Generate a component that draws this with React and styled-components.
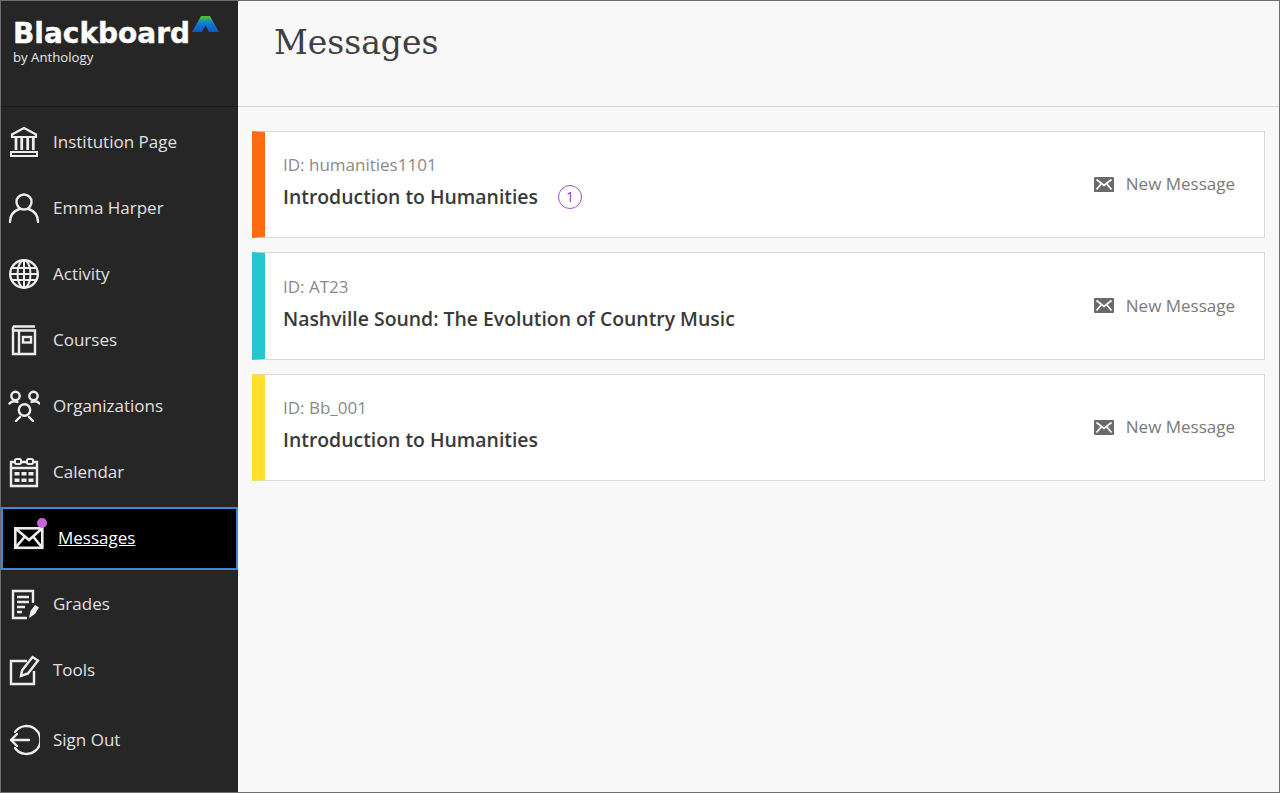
import styled, { createGlobalStyle } from "styled-components";

const GlobalStyle = createGlobalStyle`
    html, body {
        margin: 0;
        padding: 0;
        height: 100%;
    }
    body {
        font-family: "Open Sans", "Liberation Sans", sans-serif;
        background: #f8f8f8;
    }
`;

/* Icons ---------------------------*/
const Svg = ({ children, size = 32 }) => (
    <svg
        width={size}
        height={size}
        viewBox="0 0 32 32"
        fill="none"
        stroke="currentColor"
        strokeWidth="2.4"
    >
        {children}
    </svg>
);

const BankIcon = () => (
    <Svg>
        <path d="M16 2 L28 8.5 V11 H4 V8.5 Z" strokeWidth="2.2" />
        <path d="M8 12 V24 M13.7 12 V24 M19.7 12 V24 M25.3 12 V24" strokeWidth="2.8" />
        <rect x="3" y="26" width="26" height="4" strokeWidth="2" />
    </Svg>
);

const UserIcon = () => (
    <Svg>
        <circle cx="16" cy="10" r="7.5" />
        <path d="M2 30 C2 22.5 7 18.5 11.5 17 M30 30 C30 22.5 25 18.5 20.5 17" strokeLinecap="round" />
    </Svg>
);

const GlobeIcon = () => (
    <Svg>
        <circle cx="16" cy="16" r="13.8" />
        <ellipse cx="16" cy="16" rx="6.5" ry="13.8" strokeWidth="2" />
        <path d="M16 2 V30 M2 16 H30 M4 10 H28 M4 22 H28" strokeWidth="2" />
    </Svg>
);

const BookIcon = () => (
    <Svg>
        <path d="M5 2.5 H27 M5 2.5 V30 H27 V6.5 H5 M11 6.5 V30" />
        <rect x="15" y="13" width="8" height="5.5" />
    </Svg>
);

const GroupIcon = () => (
    <Svg>
        <circle cx="7.5" cy="6" r="4.2" />
        <circle cx="25.5" cy="6" r="4.2" />
        <circle cx="16.5" cy="20" r="5.7" />
        <path
            d="M1.5 13.5 C3.5 11 6 10.5 9.5 12 M31.5 13.5 C29.5 11 27 10.5 23.5 12 M8 31 L12 27 M25 31 L21 27"
            strokeLinecap="round"
        />
    </Svg>
);

const CalendarIcon = () => (
    <Svg>
        <path d="M6 6 H3 V30 H29 V6 H26 M13 6 H19 M3 12 H29" />
        <rect x="7" y="3" width="6" height="5" rx="1.5" strokeWidth="2" />
        <rect x="19" y="3" width="6" height="5" rx="1.5" strokeWidth="2" />
        <path
            d="M6.5 16 H11.5 V19.5 H6.5 Z M13.5 16 H18.5 V19.5 H13.5 Z M20.5 16 H25.5 V19.5 H20.5 Z M6.5 22.5 H11.5 V26 H6.5 Z M13.5 22.5 H18.5 V26 H13.5 Z M20.5 22.5 H25.5 V26 H20.5 Z"
            fill="currentColor"
            stroke="none"
        />
    </Svg>
);

const MailIcon = () => (
    <Svg>
        <rect x="2.3" y="6.3" width="27" height="19.5" strokeWidth="2.6" />
        <path d="M2.3 6.3 L16 18 L29.3 6.3 M2.3 25.8 L11.5 15 M29.3 25.8 L20.5 15" strokeWidth="2.6" />
    </Svg>
);

const GradesIcon = () => (
    <Svg>
        <path d="M25 15 V3 H5 V30 H19" />
        <path d="M9 9 H21 M9 14 H21 M9 19 H17 M9 24 H14" />
        <path d="M21 30 L22.5 23 L27 17 L31 19.5 L27 26 Z" fill="currentColor" stroke="none" />
    </Svg>
);

const ToolsIcon = () => (
    <Svg>
        <path d="M19 7 H3 V30 H26 V17" />
        <path d="M13 22 L14 16.5 L24.5 3 L30 6.5 L20 19.5 Z" />
    </Svg>
);

const SignOutIcon = () => (
    <Svg>
        <path d="M7 8 A14 14 0 1 1 7 24" strokeLinecap="round" />
        <path d="M21 16 H3 M9 10 L3 16 L9 22" strokeLinecap="round" strokeLinejoin="round" />
    </Svg>
);

const SmallMailIcon = () => (
    <svg width="20" height="15" viewBox="0 0 20 15">
        <rect width="20" height="15" rx="1" fill="#6a6a6c" />
        <path d="M2.5 2.5 L10 8.5 L17.5 2.5 M2.5 12.5 L7.5 6.5 M17.5 12.5 L12.5 6.5" stroke="#fff" strokeWidth="1.7" fill="none" />
    </svg>
);

const LogoMark = () => (
    <svg width="27" height="16" viewBox="0 0 27 16" style={{ display: "block" }}>
        <defs>
            <linearGradient id="markFill" x1="0" y1="0" x2="0" y2="1">
                <stop offset="0" stopColor="#62c21f" />
                <stop offset="0.35" stopColor="#0f8fb8" />
                <stop offset="0.6" stopColor="#0f6fd0" />
                <stop offset="1" stopColor="#1457b8" />
            </linearGradient>
        </defs>
        <path d="M0 16 L9 0 H18 L27 16 H17 L13.5 9.5 L10 16 Z" fill="url(#markFill)" />
    </svg>
);

/* Data ---------------------------*/
const navItems = [
    { label: "Institution Page", icon: <BankIcon /> },
    { label: "Emma Harper", icon: <UserIcon /> },
    { label: "Activity", icon: <GlobeIcon /> },
    { label: "Courses", icon: <BookIcon /> },
    { label: "Organizations", icon: <GroupIcon /> },
    { label: "Calendar", icon: <CalendarIcon /> },
    { label: "Messages", icon: <MailIcon />, active: true },
    { label: "Grades", icon: <GradesIcon /> },
    { label: "Tools", icon: <ToolsIcon /> },
    { label: "Sign Out", icon: <SignOutIcon />, last: true },
];

const courses = [
    { id: "humanities1101", name: "Introduction to Humanities", color: "#ff6a13", badge: 1 },
    { id: "AT23", name: "Nashville Sound: The Evolution of Country Music", color: "#25c7cf" },
    { id: "Bb_001", name: "Introduction to Humanities", color: "#ffdf2b" },
];

const App = () => {
    return (
        <>
            <GlobalStyle />
            <Page>
                <Sidebar>
                    <Brand>
                        <Wordmark>
                            Blackboard
                            <LogoMarkSlot>
                                <LogoMark />
                            </LogoMarkSlot>
                        </Wordmark>
                        <ByLine>by Anthology</ByLine>
                    </Brand>
                    <Nav>
                        {navItems.map((item) => (
                            <NavItem key={item.label} $active={item.active} $last={item.last}>
                                <IconSlot>
                                    {item.icon}
                                    {item.active && <Dot />}
                                </IconSlot>
                                <NavLabel $active={item.active}>{item.label}</NavLabel>
                            </NavItem>
                        ))}
                    </Nav>
                </Sidebar>
                <Main>
                    <Header>
                        <Title>Messages</Title>
                    </Header>
                    <CourseList>
                        {courses.map((course) => (
                            <Card key={course.id} $color={course.color}>
                                <CardText>
                                    <CourseId>ID: {course.id}</CourseId>
                                    <CourseName>
                                        {course.name}
                                        {course.badge && <Badge>{course.badge}</Badge>}
                                    </CourseName>
                                </CardText>
                                <NewMessage>
                                    <SmallMailIcon />
                                    New Message
                                </NewMessage>
                            </Card>
                        ))}
                    </CourseList>
                </Main>
            </Page>
        </>
    );
};

export default App;

const Page = styled.div`
    display: flex;
    width: 1280px;
    height: 793px;
    box-sizing: border-box;
    border: 1px solid #6e6e6e;
    overflow: hidden;
`;

const Sidebar = styled.aside`
    width: 237px;
    flex: none;
    background: #262626;
    color: #e6e6e6;
`;

const Brand = styled.div`
    height: 106px;
    box-sizing: border-box;
    padding: 17px 0 0 12px;
    border-bottom: 1px solid #1a1a1a;
`;

const Wordmark = styled.div`
    position: relative;
    font-family: "DejaVu Sans", sans-serif;
    font-weight: 700;
    font-size: 28px;
    line-height: 31px;
    color: #ffffff;
    -webkit-text-stroke: 0.4px #ffffff;
`;

const LogoMarkSlot = styled.span`
    position: absolute;
    left: 179px;
    top: -2px;
`;

const ByLine = styled.div`
    font-size: 13.2px;
    line-height: 16px;
    color: #e8e8e8;
`;

const Nav = styled.nav`
    display: flex;
    flex-direction: column;
    padding-top: 1.6px;
`;

const NavItem = styled.a`
    display: flex;
    align-items: center;
    height: 66.1px;
    box-sizing: border-box;
    padding-left: 7px;
    margin-top: ${(p) => (p.$last ? "4px" : "0")};
    ${(p) =>
        p.$active &&
        `
        height: 63px;
        margin: 1.5px 0 1.6px;
        background: #000000;
        border: 2px solid #3b87d9;
        padding-left: 10px;
    `}
`;

const IconSlot = styled.span`
    position: relative;
    display: flex;
    width: 32px;
    height: 32px;
    margin-right: 13px;
    color: #ededed;
`;

const Dot = styled.span`
    position: absolute;
    top: -4px;
    right: -2px;
    width: 10px;
    height: 10px;
    border-radius: 50%;
    background: #c564d6;
`;

const NavLabel = styled.span`
    font-size: 17px;
    line-height: 24px;
    color: ${(p) => (p.$active ? "#ffffff" : "#e0e0e0")};
    text-decoration: ${(p) => (p.$active ? "underline" : "none")};
`;

const Main = styled.main`
    flex: 1;
    min-width: 0;
    background: #f8f8f8;
`;

const Header = styled.header`
    height: 106px;
    box-sizing: border-box;
    padding: 18px 0 0 36px;
    border-bottom: 1px solid #d4d4d4;
`;

const Title = styled.h1`
    margin: 0;
    font-family: "DejaVu Serif", "Liberation Serif", serif;
    font-weight: 400;
    font-size: 33px;
    line-height: 48px;
    color: #404040;
`;

const CourseList = styled.div`
    display: flex;
    flex-direction: column;
    gap: 14.2px;
    padding: 24px 14px 0 14px;
`;

const Card = styled.section`
    display: flex;
    align-items: center;
    justify-content: space-between;
    height: 107.3px;
    box-sizing: border-box;
    background: #ffffff;
    border: 1px solid #d9d9d9;
    border-left: 13px solid ${(p) => p.$color};
    padding: 0 29px 0 18px;
`;

const CardText = styled.div`
    display: flex;
    flex-direction: column;
    gap: 7px;
    margin-top: -6px;
`;

const CourseId = styled.div`
    font-size: 17px;
    line-height: 24px;
    color: #8a8a8a;
`;

const CourseName = styled.div`
    display: flex;
    align-items: center;
    font-size: 19.4px;
    font-weight: 600;
    line-height: 26px;
    color: #3a3a3a;
`;

const Badge = styled.span`
    display: inline-flex;
    align-items: center;
    justify-content: center;
    width: 24px;
    height: 24px;
    box-sizing: border-box;
    margin-left: 20px;
    border: 1px solid #a44fc0;
    border-radius: 50%;
    font-size: 14px;
    font-weight: 400;
    color: #8f3fa8;
`;

const NewMessage = styled.div`
    display: flex;
    align-items: center;
    gap: 12px;
    margin-top: -1px;
    font-size: 17px;
    line-height: 24px;
    color: #7a7a7a;
`;
